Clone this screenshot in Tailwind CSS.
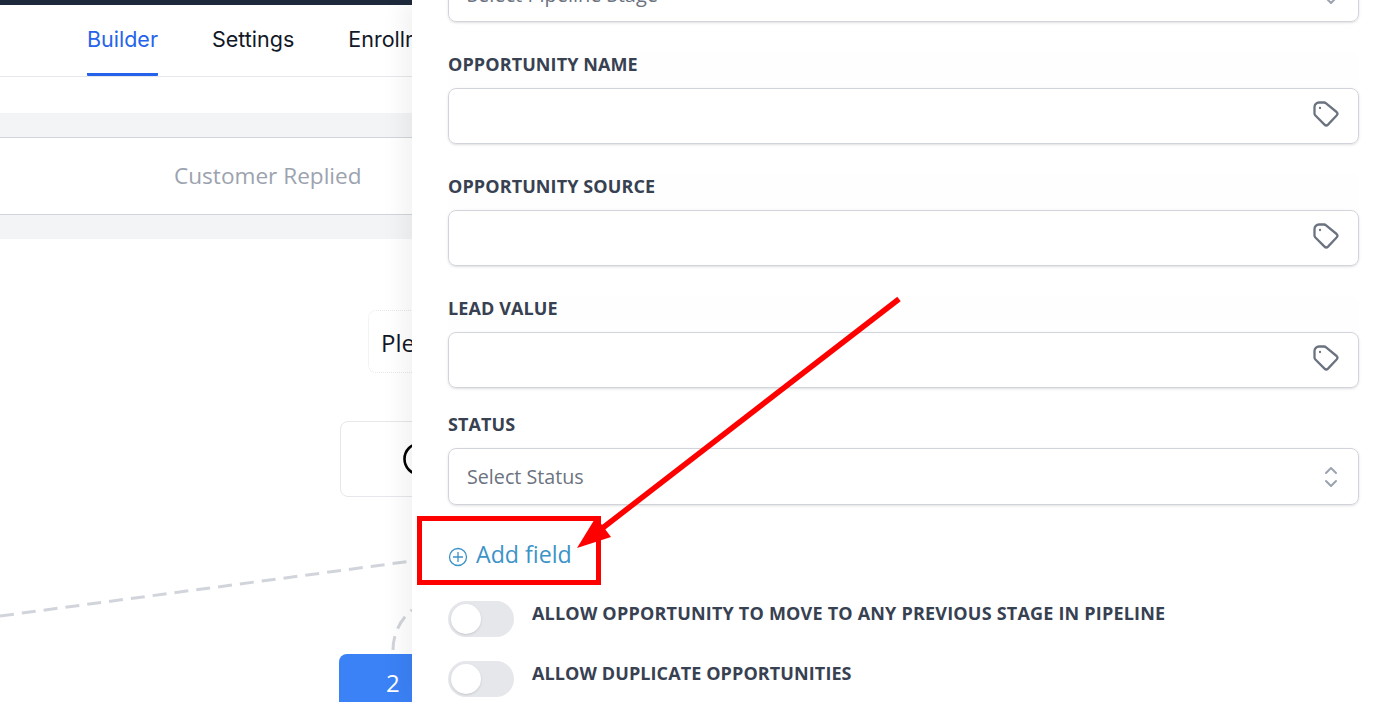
<!DOCTYPE html>
<html lang="en">

<head>
    <meta charset="UTF-8" />
    <title>Workflow Builder</title>
    <script src="https://cdn.jsdelivr.net/npm/@tailwindcss/browser@4"></script>
</head>

<body class="bg-white overflow-hidden font-['Open_Sans',sans-serif]">
    <div class="relative w-[1394px] h-[702px] overflow-hidden">

        <!-- Top bar -->
        <div class="h-[5px] bg-[#1e293b]"></div>

        <!-- Tabs -->
        <nav class="h-[72px] border-b border-[#e5e7eb] flex gap-[54px] pl-[87px] font-['Inter',sans-serif] text-[21.500px] text-[#111827]">
            <a class="h-[71px] pt-[18px] text-[#2563eb] border-b-[3px] border-[#2563eb] rounded-b-[1px]">Builder</a>
            <a class="pt-[18px]">Settings</a>
            <a class="pt-[18px] whitespace-nowrap">Enrollment History</a>
        </nav>

        <!-- Trigger band -->
        <div class="mt-[36px] h-[24px] bg-[#f3f4f6]"></div>
        <div class="h-[78px] border-y border-[#d1d5db] flex items-center pl-[174px] pb-[1px] text-[22.600px] text-[#9ca3af]">Customer Replied</div>
        <div class="h-[24px] bg-[#f3f4f6]"></div>

        <!-- Canvas nodes -->
        <div class="absolute left-[368px] top-[310px] w-[300px] h-[63px] rounded-lg border border-dotted border-[#e5e7eb] pl-[12px] pt-[3px] flex items-center text-[24px] text-[#111827]">Please select</div>
        <div class="absolute left-[340px] top-[421px] w-[300px] h-[76px] rounded-lg border border-[#e5e7eb] bg-white">
            <svg class="absolute left-[61px] top-[19px]" width="36" height="36" viewBox="0 0 36 36" fill="none" stroke="#000" stroke-width="2.600"><circle cx="18" cy="18" r="15.500" /></svg>
        </div>
        <div class="absolute left-[339px] top-[654px] w-[110px] h-[60px] rounded-t-lg bg-[#3b82f6] text-white text-[24px] pl-[47px] pt-[11px]">2</div>
        <svg class="absolute left-0 top-[540px]" width="420" height="130" viewBox="0 0 420 130" fill="none" stroke="#d1d5db" stroke-width="3" stroke-dasharray="14 8">
            <path d="M0 76 L412 21" />
            <path d="M393 110 C393 92 402 78 412 70" />
        </svg>

        <!-- Side panel -->
        <aside class="absolute right-0 top-0 w-[982px] h-[702px] bg-white shadow-[-8px_0_24px_rgba(0,0,0,0.06)] pl-[36px] pr-[35px] text-[#374151] overflow-hidden">
            <div class="-mt-[35px] h-[57px] rounded-lg border border-[#d1d5db] shadow-sm flex items-center justify-between pl-[18px] pr-[19px] text-[20px] text-[#6b7280]">
                <span class="pt-[2px]">Select Pipeline Stage</span>
                <svg width="16" height="26" viewBox="0 0 16 26" fill="none" stroke="#9ca3af" stroke-width="2" stroke-linecap="round" stroke-linejoin="round"><path d="M3 9l5-5 5 5M3 17l5 5 5-5" /></svg>
            </div>

            <div class="mt-[30px] h-[36px] rounded-t-lg bg-[#fefefe] text-[18px] font-bold tracking-[0.1px] leading-[24px]">OPPORTUNITY NAME</div>
            <div class="h-[56px] rounded-lg border border-[#d1d5db] shadow-sm flex items-center justify-end pr-[19px] pb-[5px]">
                <svg width="26" height="26" viewBox="0 0 26 26" fill="none" stroke="#6b7280" stroke-width="2.300" stroke-linecap="round" stroke-linejoin="round"><path d="M6 1.500H11a3 3 0 0 1 2.100.9L23.600 11a2.500 2.500 0 0 1 0 3.500L15 23.600a2.500 2.500 0 0 1-3.500 0L2.400 14.500A3 3 0 0 1 1.500 12.400V6A4.500 4.500 0 0 1 6 1.500z" /><path d="M7 7h.01" /></svg>
            </div>

            <div class="mt-[30px] h-[36px] rounded-t-lg bg-[#fefefe] text-[18px] font-bold tracking-[0.1px] leading-[24px]">OPPORTUNITY SOURCE</div>
            <div class="h-[56px] rounded-lg border border-[#d1d5db] shadow-sm flex items-center justify-end pr-[19px] pb-[5px]">
                <svg width="26" height="26" viewBox="0 0 26 26" fill="none" stroke="#6b7280" stroke-width="2.300" stroke-linecap="round" stroke-linejoin="round"><path d="M6 1.500H11a3 3 0 0 1 2.100.9L23.600 11a2.500 2.500 0 0 1 0 3.500L15 23.600a2.500 2.500 0 0 1-3.500 0L2.400 14.500A3 3 0 0 1 1.500 12.400V6A4.500 4.500 0 0 1 6 1.500z" /><path d="M7 7h.01" /></svg>
            </div>

            <div class="mt-[30px] h-[36px] rounded-t-lg bg-[#fefefe] text-[18px] font-bold tracking-[0.1px] leading-[24px]">LEAD VALUE</div>
            <div class="h-[56px] rounded-lg border border-[#d1d5db] shadow-sm flex items-center justify-end pr-[19px] pb-[5px]">
                <svg width="26" height="26" viewBox="0 0 26 26" fill="none" stroke="#6b7280" stroke-width="2.300" stroke-linecap="round" stroke-linejoin="round"><path d="M6 1.500H11a3 3 0 0 1 2.100.9L23.600 11a2.500 2.500 0 0 1 0 3.500L15 23.600a2.500 2.500 0 0 1-3.500 0L2.400 14.500A3 3 0 0 1 1.500 12.400V6A4.500 4.500 0 0 1 6 1.500z" /><path d="M7 7h.01" /></svg>
            </div>

            <div class="mt-[24px] h-[36px] text-[18px] font-bold tracking-[0.1px] leading-[24px]">STATUS</div>
            <div class="h-[57px] rounded-lg border border-[#d1d5db] shadow-sm flex items-center justify-between pl-[18px] pr-[19px] text-[19.700px] text-[#6b7280]">
                <span class="pt-[1px]">Select Status</span>
                <svg width="16" height="26" viewBox="0 0 16 26" fill="none" stroke="#9ca3af" stroke-width="2" stroke-linecap="round" stroke-linejoin="round"><path d="M3 9l5-5 5 5M3 17l5 5 5-5" /></svg>
            </div>

            <div class="mt-[31px] h-[36px] flex items-center gap-[8px] text-[23.200px] text-[#3b93c8]">
                <svg class="mt-[5px]" width="20" height="20" viewBox="0 0 20 20" fill="none" stroke="#3b93c8" stroke-width="1.300"><circle cx="10" cy="10" r="8.500" /><path d="M10 5v10M5 10h10" /></svg>
                <span>Add field</span>
            </div>

            <div class="mt-[29px] flex items-start gap-[18px]">
                <div class="w-[66px] h-[36px] rounded-full bg-[#e5e7eb] p-[3px]"><div class="w-[30px] h-[30px] rounded-full bg-white shadow"></div></div>
                <span class="text-[18px] font-bold tracking-[0.2px] leading-[24px]">ALLOW OPPORTUNITY TO MOVE TO ANY PREVIOUS STAGE IN PIPELINE</span>
            </div>
            <div class="mt-[24px] flex items-start gap-[18px]">
                <div class="w-[66px] h-[36px] rounded-full bg-[#e5e7eb] p-[3px]"><div class="w-[30px] h-[30px] rounded-full bg-white shadow"></div></div>
                <span class="text-[18px] font-bold tracking-[0.1px] leading-[24px]">ALLOW DUPLICATE OPPORTUNITIES</span>
            </div>
        </aside>

        <!-- Annotation -->
        <div class="absolute left-[417px] top-[516px] w-[184px] h-[69px] border-[5px] border-[#ff0000]"></div>
        <svg class="absolute left-0 top-0 pointer-events-none" width="1394" height="702" viewBox="0 0 1394 702">
            <path d="M899 299 L600 530" stroke="#ff0000" stroke-width="5.500" fill="none" />
            <path d="M577 548 L596 517 L611 537 Z" fill="#ff0000" />
        </svg>
    </div>
</body>

</html>
